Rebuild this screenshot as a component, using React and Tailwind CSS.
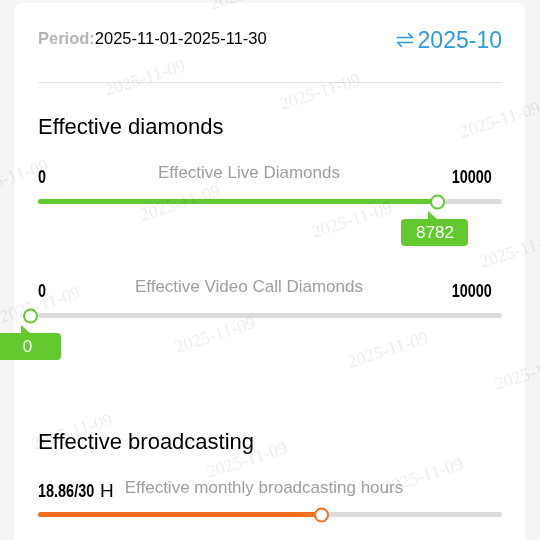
import React from 'react';

const marks = [
  [250, -8], [145, 78], [320, 92], [500, 120], [8, 178], [180, 203], [352, 220], [520, 250],
  [40, 305], [215, 335], [388, 350], [535, 372], [72, 432], [247, 460], [423, 476],
];

const Watermark = ({ x, y }) => (
  <span
    className="absolute pointer-events-none whitespace-nowrap mix-blend-multiply text-[18px] text-[#ededed] font-['Liberation_Serif',serif] -rotate-[18deg] -translate-x-1/2 -translate-y-1/2"
    style={{ left: x, top: y }}
  >
    2025-11-09
  </span>
);

const SwapIcon = () => (
  <svg width="18" height="14" viewBox="0 0 18 14" fill="none" stroke="#2b9be0" strokeWidth="1.6" strokeLinecap="round" strokeLinejoin="round">
    <path d="M1.5 4.5h15l-4-4" />
    <path d="M16.5 9.5h-15l4 4" />
  </svg>
);

// condensed bold numbers: no narrow face installed, so squeeze Liberation Sans Bold
const Num = ({ children, className = '' }) => (
  <span className={`inline-block scale-x-[0.76] font-bold text-[19px] text-black leading-none ${className}`}>
    {children}
  </span>
);

const Track = ({ pct, color, children }) => (
  <div className="relative h-[5px] rounded-full bg-[#dcdcdc]">
    <div className="absolute left-0 top-0 h-full rounded-full" style={{ width: `calc(${pct}% - 8px)`, background: color }} />
    <div
      className="absolute top-1/2 w-[15px] h-[15px] rounded-full bg-white border-2 -translate-y-1/2"
      style={{ left: `calc(${pct}% - 15.5px)`, borderColor: color }}
    />
    {children}
  </div>
);

const Tip = ({ pct, value }) => (
  <div className="absolute top-[12px]" style={{ left: `calc(${pct}% - 17px)` }}>
    <div className="w-0 h-0 border-l-[10px] border-l-transparent border-b-[9px] border-b-[#62c92f] -scale-x-100" />
    <div className="absolute top-[8px] left-[-27px] w-[67px] h-[27px] rounded-[4px] bg-[#62c92f] text-white text-[17px] flex items-center justify-center">
      {value}
    </div>
  </div>
);

const DiamondSlider = ({ label, value, max }) => {
  const pct = (value / max) * 100;
  return (
    <div>
      <div className="flex justify-between items-center pr-[10px] h-[22px] mt-[2px]">
        <Num className="origin-left -mr-[2.5px] translate-y-[1px]">0</Num>
        <span className="text-[17px] text-[#9e9e9e] -mt-[4px]">{label}</span>
        <Num className="origin-right -ml-[12.7px] translate-y-[1px]">{max}</Num>
      </div>
      <div className="mt-[13px]">
        <Track pct={pct} color="#62c92f">
          <Tip pct={pct} value={value} />
        </Track>
      </div>
    </div>
  );
};

export default function App() {
  return (
    <div className="relative w-[540px] h-[540px] overflow-hidden bg-[#f5f5f5] font-['Liberation_Sans',Arial,sans-serif]">
      <div className="ml-[14px] mt-[3px] w-[511px] h-[560px] bg-white rounded-[8px] pl-[24px] pr-[23px] pt-[22px]">
        <div className="flex justify-between items-center h-[30px]">
          <div className="text-[16.5px] -mt-[4px]">
            <span className="font-bold text-[#b5b5b5]">Period:</span>
            <span className="text-black">2025-11-01-2025-11-30</span>
          </div>
          <div className="flex items-center gap-[4px] text-[23px] text-[#2b9be0]">
            <SwapIcon />
            <span>2025-10</span>
          </div>
        </div>
        <div className="mt-[27px] h-px bg-[#e3e3e3]" />

        <h2 className="mt-[31px] text-[22px] leading-[26px] text-black">Effective diamonds</h2>

        <div className="mt-[24px]">
          <DiamondSlider label="Effective Live Diamonds" value={8782} max={10000} />
        </div>
        <div className="mt-[74px]">
          <DiamondSlider label="Effective Video Call Diamonds" value={0} max={10000} />
        </div>

        <h2 className="mt-[111px] text-[22px] leading-[26px] text-black">Effective broadcasting</h2>

        <div className="mt-[24px] flex items-center h-[22px]">
          <Num className="origin-left -mr-[19px]">18.86/30</Num>
          <span className="ml-[7px] text-[19px] text-black leading-none">H</span>
          <span className="ml-[11px] text-[17px] text-[#9e9e9e] -mt-[4px]">Effective monthly broadcasting hours</span>
        </div>
        <div className="mt-[11px]">
          <Track pct={(18.86 / 30) * 100} color="#f36f21" />
        </div>
      </div>

      {marks.map(([x, y], i) => (
        <Watermark key={i} x={x} y={y} />
      ))}
    </div>
  );
}
